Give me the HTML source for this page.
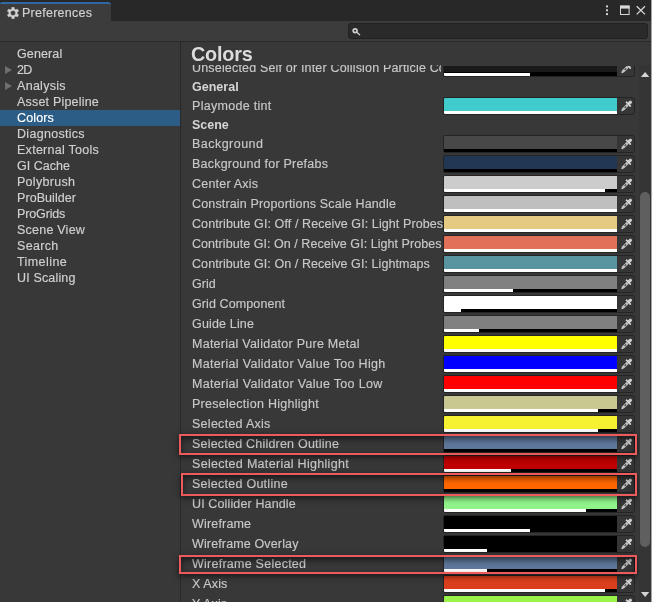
<!DOCTYPE html>
<html><head><meta charset="utf-8"><title>Preferences</title>
<style>
*{box-sizing:border-box;margin:0;padding:0}
html,body{width:652px;height:602px;overflow:hidden;background:#383838}
body{-webkit-text-stroke:.16px;position:relative;font-family:"Liberation Sans",sans-serif;font-size:12.5px;color:#c8c8c8;letter-spacing:.25px}
.abs{position:absolute}
#dock{left:0;top:0;width:652px;height:21px;background:#282828}
#tab{left:0;top:2px;width:111px;height:19px;background:#3c3c3c;border-top:2px solid #2f68a3;border-radius:2px 3px 0 0}
#tabtxt{left:22.4px;top:6px;line-height:15px;color:#d2d2d2;white-space:nowrap;will-change:transform}
#toolbar{left:0;top:21px;width:652px;height:20px;background:#3c3c3c}
#tline{left:0;top:41px;width:652px;height:1px;background:#292929}
#search{left:348px;top:23px;width:300px;height:16px;background:#2a2a2a;border:1px solid #212121;border-radius:3px}
#leftp{left:0;top:42px;width:180px;height:560px}
#ltext{position:absolute;left:0;top:0;width:180px;height:560px;will-change:transform}
.selbg{position:absolute;left:0;width:180px;height:16px;background:#2c5d87}
#vline{left:180px;top:42px;width:1px;height:560px;background:#292929}
.li{position:absolute;left:0;width:180px;height:16px;line-height:16px;padding-left:17px;white-space:nowrap;color:#d0d0d0}
.li.sel{color:#fff}
.tri{position:absolute;left:5px;width:0;height:0;border-left:7px solid #6e6e6e;border-top:4px solid transparent;border-bottom:4px solid transparent}
#title{-webkit-text-stroke:0;left:191px;top:43px;font-size:19.8px;font-weight:bold;line-height:22px;color:#dcdcdc;letter-spacing:-.2px;white-space:nowrap}
#scroll{left:181px;top:65px;width:471px;height:537px;overflow:hidden}
.lab{position:absolute;left:11px;height:20px;line-height:20px;white-space:nowrap;color:#c8c8c8}
.lab.b{-webkit-text-stroke:0;font-weight:bold;color:#d6d6d6}
.cf{position:absolute;left:262px;width:192px;height:18px;border:1px solid #242424;border-radius:2px 3px 3px 2px;background:#363636;overflow:hidden}
.cf .c{position:absolute;left:0;top:0;width:173px;height:13px}
.cf .a{position:absolute;left:0;top:13px;width:173px;height:3px;background:#000}
.cf .a i{position:absolute;left:0;top:0;height:3px;background:#fff}
.eye{position:absolute;left:177px;top:2px;width:12px;height:12px}
#track{left:639px;top:65px;width:13px;height:537px;background:#353535}
#thumb{left:640px;top:192px;width:10px;height:355px;background:#5f5f5f;border-radius:5px}
.hl{position:absolute;border:2px solid #ec5a5c;box-shadow:0 2px 6px rgba(0,0,0,.6), inset 0 3px 6px rgba(0,0,0,.55)}
</style></head><body>
<div id="layer" style="position:absolute;left:0;top:0;width:652px;height:602px;will-change:opacity">
<div id="dock" class="abs"></div>
<div id="tab" class="abs"><svg class="abs" style="left:6.7px;top:2.7px;width:12px;height:12px" viewBox="0 0 12 12"><path fill="#d4d4d4" fill-rule="evenodd" d="M4.67 1.91L4.75 0.13L7.25 0.13L7.33 1.91L8.88 2.80L10.46 1.99L11.71 4.15L10.21 5.11L10.21 6.89L11.71 7.85L10.46 10.01L8.88 9.20L7.33 10.09L7.25 11.87L4.75 11.87L4.67 10.09L3.12 9.20L1.54 10.01L0.29 7.85L1.79 6.89L1.79 5.11L0.29 4.15L1.54 1.99L3.12 2.80zM6 3.5A2.5 2.5 0 1 0 6 8.5A2.5 2.5 0 1 0 6 3.5z" stroke="#d4d4d4" stroke-width=".35" stroke-linejoin="round"/></svg></div><div id="tabtxt" class="abs">Preferences</div>
<div id="toolbar" class="abs"></div>
<div id="tline" class="abs"></div>
<div id="search" class="abs"><svg class="abs" style="left:2px;top:3px;width:10px;height:10px" viewBox="0 0 10 10"><circle cx="4.1" cy="3.7" r="1.9" fill="none" stroke="#cfcfcf" stroke-width="1.7"/><path d="M5.6 5.1L8.6 7.8" stroke="#cfcfcf" stroke-width="1.3" stroke-linecap="round"/></svg></div>
<!-- window controls -->
<svg class="abs" style="left:600px;top:0;width:52px;height:21px" viewBox="0 0 52 21">
<g fill="#cfcfcf"><rect x="6" y="5.4" width="2" height="2"/><rect x="6" y="9.3" width="2" height="2"/><rect x="6" y="13.1" width="2" height="2"/></g>
<rect x="20.5" y="6.1" width="8.6" height="8.4" fill="none" stroke="#d8d8d8" stroke-width="1"/><rect x="20" y="5.6" width="9.6" height="3" fill="#d8d8d8"/>
<path d="M36.7 6.3L45 14.4M45 6.3L36.7 14.4" stroke="#d8d8d8" stroke-width="1.3" fill="none"/>
</svg>
<div id="leftp" class="abs">
<i class="tri" style="top:24px"></i>
<i class="tri" style="top:40px"></i>
<div class="selbg" style="top:68px"></div>
<div id="ltext">
<div class="li" style="top:4px;letter-spacing:0.117px">General</div>
<div class="li" style="top:20px;letter-spacing:-0.650px">2D</div>
<div class="li" style="top:36px;letter-spacing:0.293px">Analysis</div>
<div class="li" style="top:52px;letter-spacing:0.196px">Asset Pipeline</div>
<div class="li sel" style="top:68px;letter-spacing:0.130px">Colors</div>
<div class="li" style="top:84px;letter-spacing:0.300px">Diagnostics</div>
<div class="li" style="top:100px;letter-spacing:0.273px">External Tools</div>
<div class="li" style="top:116px;letter-spacing:0.021px">GI Cache</div>
<div class="li" style="top:132px;letter-spacing:0.287px">Polybrush</div>
<div class="li" style="top:148px;letter-spacing:0.072px">ProBuilder</div>
<div class="li" style="top:164px;letter-spacing:-0.136px">ProGrids</div>
<div class="li" style="top:180px;letter-spacing:0.228px">Scene View</div>
<div class="li" style="top:196px;letter-spacing:0.330px">Search</div>
<div class="li" style="top:212px;letter-spacing:0.421px">Timeline</div>
<div class="li" style="top:228px;letter-spacing:0.161px">UI Scaling</div>
</div>
</div>
<div id="vline" class="abs"></div>
<div id="title" class="abs">Colors</div>
<div id="scroll" class="abs">
<div class="lab b" style="top:12px;letter-spacing:0.017px">General</div>
<div class="lab b" style="top:50px;letter-spacing:-0.025px">Scene</div>
<div class="lab" style="top:-7px;max-width:249px;overflow:hidden;letter-spacing:.175px">Unselected Self or Inter Collision Particle Co</div>
<div class="cf" style="top:-6px;clip-path:inset(7px 0 0 0)"><div class="c" style="background:#191919;height:12px"></div><div class="a" style="top:12px;height:4px"><i style="top:1px;width:86px"></i></div><svg class="eye" viewBox="0 0 12 12"><g transform="translate(-.8 .3) rotate(45 6 6)" fill="#cecece"><rect x="4.4" y="-1.4" width="3.2" height="4.6" rx="1.4"/><rect x="2.6" y="2.1" width="6.8" height="1.7" rx=".3" fill="#d4d4d4"/><path d="M4.7 3.8h2.6v6.4l-.7 2.2q-.6 .5 -1.2 0l-.7-2.2z" fill="#c2c2c2"/><rect x="5.45" y="6.3" width="1.1" height="1.9" fill="#3a3a3a"/></g></svg></div>
<div class="lab" style="top:31px;letter-spacing:0.292px">Playmode tint</div>
<div class="cf" style="top:32px"><div class="c" style="background:#40cccc"></div><div class="a"><i style="width:173px"></i></div><svg class="eye" viewBox="0 0 12 12"><g transform="translate(-.8 .3) rotate(45 6 6)" fill="#cecece"><rect x="4.4" y="-1.4" width="3.2" height="4.6" rx="1.4"/><rect x="2.6" y="2.1" width="6.8" height="1.7" rx=".3" fill="#d4d4d4"/><path d="M4.7 3.8h2.6v6.4l-.7 2.2q-.6 .5 -1.2 0l-.7-2.2z" fill="#c2c2c2"/><rect x="5.45" y="6.3" width="1.1" height="1.9" fill="#3a3a3a"/></g></svg></div>
<div class="lab" style="top:69px;letter-spacing:0.472px">Background</div>
<div class="cf" style="top:70px"><div class="c" style="background:#484848"></div><div class="a"><i style="width:0px"></i></div><svg class="eye" viewBox="0 0 12 12"><g transform="translate(-.8 .3) rotate(45 6 6)" fill="#cecece"><rect x="4.4" y="-1.4" width="3.2" height="4.6" rx="1.4"/><rect x="2.6" y="2.1" width="6.8" height="1.7" rx=".3" fill="#d4d4d4"/><path d="M4.7 3.8h2.6v6.4l-.7 2.2q-.6 .5 -1.2 0l-.7-2.2z" fill="#c2c2c2"/><rect x="5.45" y="6.3" width="1.1" height="1.9" fill="#3a3a3a"/></g></svg></div>
<div class="lab" style="top:89px;letter-spacing:0.217px">Background for Prefabs</div>
<div class="cf" style="top:90px"><div class="c" style="background:#213754"></div><div class="a"><i style="width:0px"></i></div><svg class="eye" viewBox="0 0 12 12"><g transform="translate(-.8 .3) rotate(45 6 6)" fill="#cecece"><rect x="4.4" y="-1.4" width="3.2" height="4.6" rx="1.4"/><rect x="2.6" y="2.1" width="6.8" height="1.7" rx=".3" fill="#d4d4d4"/><path d="M4.7 3.8h2.6v6.4l-.7 2.2q-.6 .5 -1.2 0l-.7-2.2z" fill="#c2c2c2"/><rect x="5.45" y="6.3" width="1.1" height="1.9" fill="#3a3a3a"/></g></svg></div>
<div class="lab" style="top:109px;letter-spacing:0.210px">Center Axis</div>
<div class="cf" style="top:110px"><div class="c" style="background:#cccccc"></div><div class="a"><i style="width:161px"></i></div><svg class="eye" viewBox="0 0 12 12"><g transform="translate(-.8 .3) rotate(45 6 6)" fill="#cecece"><rect x="4.4" y="-1.4" width="3.2" height="4.6" rx="1.4"/><rect x="2.6" y="2.1" width="6.8" height="1.7" rx=".3" fill="#d4d4d4"/><path d="M4.7 3.8h2.6v6.4l-.7 2.2q-.6 .5 -1.2 0l-.7-2.2z" fill="#c2c2c2"/><rect x="5.45" y="6.3" width="1.1" height="1.9" fill="#3a3a3a"/></g></svg></div>
<div class="lab" style="top:129px;letter-spacing:0.156px">Constrain Proportions Scale Handle</div>
<div class="cf" style="top:130px"><div class="c" style="background:#bfbfbf"></div><div class="a"><i style="width:173px"></i></div><svg class="eye" viewBox="0 0 12 12"><g transform="translate(-.8 .3) rotate(45 6 6)" fill="#cecece"><rect x="4.4" y="-1.4" width="3.2" height="4.6" rx="1.4"/><rect x="2.6" y="2.1" width="6.8" height="1.7" rx=".3" fill="#d4d4d4"/><path d="M4.7 3.8h2.6v6.4l-.7 2.2q-.6 .5 -1.2 0l-.7-2.2z" fill="#c2c2c2"/><rect x="5.45" y="6.3" width="1.1" height="1.9" fill="#3a3a3a"/></g></svg></div>
<div class="lab" style="top:149px;letter-spacing:0.089px">Contribute GI: Off / Receive GI: Light Probes</div>
<div class="cf" style="top:150px"><div class="c" style="background:#e5cb81"></div><div class="a"><i style="width:173px"></i></div><svg class="eye" viewBox="0 0 12 12"><g transform="translate(-.8 .3) rotate(45 6 6)" fill="#cecece"><rect x="4.4" y="-1.4" width="3.2" height="4.6" rx="1.4"/><rect x="2.6" y="2.1" width="6.8" height="1.7" rx=".3" fill="#d4d4d4"/><path d="M4.7 3.8h2.6v6.4l-.7 2.2q-.6 .5 -1.2 0l-.7-2.2z" fill="#c2c2c2"/><rect x="5.45" y="6.3" width="1.1" height="1.9" fill="#3a3a3a"/></g></svg></div>
<div class="lab" style="top:169px;letter-spacing:0.048px">Contribute GI: On / Receive GI: Light Probes</div>
<div class="cf" style="top:170px"><div class="c" style="background:#e17058"></div><div class="a"><i style="width:173px"></i></div><svg class="eye" viewBox="0 0 12 12"><g transform="translate(-.8 .3) rotate(45 6 6)" fill="#cecece"><rect x="4.4" y="-1.4" width="3.2" height="4.6" rx="1.4"/><rect x="2.6" y="2.1" width="6.8" height="1.7" rx=".3" fill="#d4d4d4"/><path d="M4.7 3.8h2.6v6.4l-.7 2.2q-.6 .5 -1.2 0l-.7-2.2z" fill="#c2c2c2"/><rect x="5.45" y="6.3" width="1.1" height="1.9" fill="#3a3a3a"/></g></svg></div>
<div class="lab" style="top:189px;letter-spacing:0.075px">Contribute GI: On / Receive GI: Lightmaps</div>
<div class="cf" style="top:190px"><div class="c" style="background:#5994a1"></div><div class="a"><i style="width:173px"></i></div><svg class="eye" viewBox="0 0 12 12"><g transform="translate(-.8 .3) rotate(45 6 6)" fill="#cecece"><rect x="4.4" y="-1.4" width="3.2" height="4.6" rx="1.4"/><rect x="2.6" y="2.1" width="6.8" height="1.7" rx=".3" fill="#d4d4d4"/><path d="M4.7 3.8h2.6v6.4l-.7 2.2q-.6 .5 -1.2 0l-.7-2.2z" fill="#c2c2c2"/><rect x="5.45" y="6.3" width="1.1" height="1.9" fill="#3a3a3a"/></g></svg></div>
<div class="lab" style="top:209px;letter-spacing:0.017px">Grid</div>
<div class="cf" style="top:210px"><div class="c" style="background:#808080"></div><div class="a"><i style="width:69px"></i></div><svg class="eye" viewBox="0 0 12 12"><g transform="translate(-.8 .3) rotate(45 6 6)" fill="#cecece"><rect x="4.4" y="-1.4" width="3.2" height="4.6" rx="1.4"/><rect x="2.6" y="2.1" width="6.8" height="1.7" rx=".3" fill="#d4d4d4"/><path d="M4.7 3.8h2.6v6.4l-.7 2.2q-.6 .5 -1.2 0l-.7-2.2z" fill="#c2c2c2"/><rect x="5.45" y="6.3" width="1.1" height="1.9" fill="#3a3a3a"/></g></svg></div>
<div class="lab" style="top:229px;letter-spacing:0.104px">Grid Component</div>
<div class="cf" style="top:230px"><div class="c" style="background:#ffffff"></div><div class="a"><i style="width:17px"></i></div><svg class="eye" viewBox="0 0 12 12"><g transform="translate(-.8 .3) rotate(45 6 6)" fill="#cecece"><rect x="4.4" y="-1.4" width="3.2" height="4.6" rx="1.4"/><rect x="2.6" y="2.1" width="6.8" height="1.7" rx=".3" fill="#d4d4d4"/><path d="M4.7 3.8h2.6v6.4l-.7 2.2q-.6 .5 -1.2 0l-.7-2.2z" fill="#c2c2c2"/><rect x="5.45" y="6.3" width="1.1" height="1.9" fill="#3a3a3a"/></g></svg></div>
<div class="lab" style="top:249px;letter-spacing:0.161px">Guide Line</div>
<div class="cf" style="top:250px"><div class="c" style="background:#808080"></div><div class="a"><i style="width:35px"></i></div><svg class="eye" viewBox="0 0 12 12"><g transform="translate(-.8 .3) rotate(45 6 6)" fill="#cecece"><rect x="4.4" y="-1.4" width="3.2" height="4.6" rx="1.4"/><rect x="2.6" y="2.1" width="6.8" height="1.7" rx=".3" fill="#d4d4d4"/><path d="M4.7 3.8h2.6v6.4l-.7 2.2q-.6 .5 -1.2 0l-.7-2.2z" fill="#c2c2c2"/><rect x="5.45" y="6.3" width="1.1" height="1.9" fill="#3a3a3a"/></g></svg></div>
<div class="lab" style="top:269px;letter-spacing:0.257px">Material Validator Pure Metal</div>
<div class="cf" style="top:270px"><div class="c" style="background:#ffff00"></div><div class="a"><i style="width:173px"></i></div><svg class="eye" viewBox="0 0 12 12"><g transform="translate(-.8 .3) rotate(45 6 6)" fill="#cecece"><rect x="4.4" y="-1.4" width="3.2" height="4.6" rx="1.4"/><rect x="2.6" y="2.1" width="6.8" height="1.7" rx=".3" fill="#d4d4d4"/><path d="M4.7 3.8h2.6v6.4l-.7 2.2q-.6 .5 -1.2 0l-.7-2.2z" fill="#c2c2c2"/><rect x="5.45" y="6.3" width="1.1" height="1.9" fill="#3a3a3a"/></g></svg></div>
<div class="lab" style="top:289px;letter-spacing:0.306px">Material Validator Value Too High</div>
<div class="cf" style="top:290px"><div class="c" style="background:#0000ff"></div><div class="a"><i style="width:173px"></i></div><svg class="eye" viewBox="0 0 12 12"><g transform="translate(-.8 .3) rotate(45 6 6)" fill="#cecece"><rect x="4.4" y="-1.4" width="3.2" height="4.6" rx="1.4"/><rect x="2.6" y="2.1" width="6.8" height="1.7" rx=".3" fill="#d4d4d4"/><path d="M4.7 3.8h2.6v6.4l-.7 2.2q-.6 .5 -1.2 0l-.7-2.2z" fill="#c2c2c2"/><rect x="5.45" y="6.3" width="1.1" height="1.9" fill="#3a3a3a"/></g></svg></div>
<div class="lab" style="top:309px;letter-spacing:0.308px">Material Validator Value Too Low</div>
<div class="cf" style="top:310px"><div class="c" style="background:#ff0000"></div><div class="a"><i style="width:173px"></i></div><svg class="eye" viewBox="0 0 12 12"><g transform="translate(-.8 .3) rotate(45 6 6)" fill="#cecece"><rect x="4.4" y="-1.4" width="3.2" height="4.6" rx="1.4"/><rect x="2.6" y="2.1" width="6.8" height="1.7" rx=".3" fill="#d4d4d4"/><path d="M4.7 3.8h2.6v6.4l-.7 2.2q-.6 .5 -1.2 0l-.7-2.2z" fill="#c2c2c2"/><rect x="5.45" y="6.3" width="1.1" height="1.9" fill="#3a3a3a"/></g></svg></div>
<div class="lab" style="top:329px;letter-spacing:0.279px">Preselection Highlight</div>
<div class="cf" style="top:330px"><div class="c" style="background:#c9c890"></div><div class="a"><i style="width:154px"></i></div><svg class="eye" viewBox="0 0 12 12"><g transform="translate(-.8 .3) rotate(45 6 6)" fill="#cecece"><rect x="4.4" y="-1.4" width="3.2" height="4.6" rx="1.4"/><rect x="2.6" y="2.1" width="6.8" height="1.7" rx=".3" fill="#d4d4d4"/><path d="M4.7 3.8h2.6v6.4l-.7 2.2q-.6 .5 -1.2 0l-.7-2.2z" fill="#c2c2c2"/><rect x="5.45" y="6.3" width="1.1" height="1.9" fill="#3a3a3a"/></g></svg></div>
<div class="lab" style="top:349px;letter-spacing:0.275px">Selected Axis</div>
<div class="cf" style="top:350px"><div class="c" style="background:#f6f232"></div><div class="a"><i style="width:154px"></i></div><svg class="eye" viewBox="0 0 12 12"><g transform="translate(-.8 .3) rotate(45 6 6)" fill="#cecece"><rect x="4.4" y="-1.4" width="3.2" height="4.6" rx="1.4"/><rect x="2.6" y="2.1" width="6.8" height="1.7" rx=".3" fill="#d4d4d4"/><path d="M4.7 3.8h2.6v6.4l-.7 2.2q-.6 .5 -1.2 0l-.7-2.2z" fill="#c2c2c2"/><rect x="5.45" y="6.3" width="1.1" height="1.9" fill="#3a3a3a"/></g></svg></div>
<div class="lab" style="top:369px;letter-spacing:0.212px">Selected Children Outline</div>
<div class="cf" style="top:370px"><div class="c" style="background:#5e779b"></div><div class="a"><i style="width:0px"></i></div><svg class="eye" viewBox="0 0 12 12"><g transform="translate(-.8 .3) rotate(45 6 6)" fill="#cecece"><rect x="4.4" y="-1.4" width="3.2" height="4.6" rx="1.4"/><rect x="2.6" y="2.1" width="6.8" height="1.7" rx=".3" fill="#d4d4d4"/><path d="M4.7 3.8h2.6v6.4l-.7 2.2q-.6 .5 -1.2 0l-.7-2.2z" fill="#c2c2c2"/><rect x="5.45" y="6.3" width="1.1" height="1.9" fill="#3a3a3a"/></g></svg></div>
<div class="lab" style="top:389px;letter-spacing:0.308px">Selected Material Highlight</div>
<div class="cf" style="top:390px"><div class="c" style="background:#bf0000"></div><div class="a"><i style="width:67px"></i></div><svg class="eye" viewBox="0 0 12 12"><g transform="translate(-.8 .3) rotate(45 6 6)" fill="#cecece"><rect x="4.4" y="-1.4" width="3.2" height="4.6" rx="1.4"/><rect x="2.6" y="2.1" width="6.8" height="1.7" rx=".3" fill="#d4d4d4"/><path d="M4.7 3.8h2.6v6.4l-.7 2.2q-.6 .5 -1.2 0l-.7-2.2z" fill="#c2c2c2"/><rect x="5.45" y="6.3" width="1.1" height="1.9" fill="#3a3a3a"/></g></svg></div>
<div class="lab" style="top:409px;letter-spacing:0.257px">Selected Outline</div>
<div class="cf" style="top:410px"><div class="c" style="background:#ff6600"></div><div class="a"><i style="width:0px"></i></div><svg class="eye" viewBox="0 0 12 12"><g transform="translate(-.8 .3) rotate(45 6 6)" fill="#cecece"><rect x="4.4" y="-1.4" width="3.2" height="4.6" rx="1.4"/><rect x="2.6" y="2.1" width="6.8" height="1.7" rx=".3" fill="#d4d4d4"/><path d="M4.7 3.8h2.6v6.4l-.7 2.2q-.6 .5 -1.2 0l-.7-2.2z" fill="#c2c2c2"/><rect x="5.45" y="6.3" width="1.1" height="1.9" fill="#3a3a3a"/></g></svg></div>
<div class="lab" style="top:429px;letter-spacing:0.132px">UI Collider Handle</div>
<div class="cf" style="top:430px"><div class="c" style="background:#91f48b"></div><div class="a"><i style="width:142px"></i></div><svg class="eye" viewBox="0 0 12 12"><g transform="translate(-.8 .3) rotate(45 6 6)" fill="#cecece"><rect x="4.4" y="-1.4" width="3.2" height="4.6" rx="1.4"/><rect x="2.6" y="2.1" width="6.8" height="1.7" rx=".3" fill="#d4d4d4"/><path d="M4.7 3.8h2.6v6.4l-.7 2.2q-.6 .5 -1.2 0l-.7-2.2z" fill="#c2c2c2"/><rect x="5.45" y="6.3" width="1.1" height="1.9" fill="#3a3a3a"/></g></svg></div>
<div class="lab" style="top:449px;letter-spacing:0.175px">Wireframe</div>
<div class="cf" style="top:450px"><div class="c" style="background:#000000"></div><div class="a"><i style="width:86px"></i></div><svg class="eye" viewBox="0 0 12 12"><g transform="translate(-.8 .3) rotate(45 6 6)" fill="#cecece"><rect x="4.4" y="-1.4" width="3.2" height="4.6" rx="1.4"/><rect x="2.6" y="2.1" width="6.8" height="1.7" rx=".3" fill="#d4d4d4"/><path d="M4.7 3.8h2.6v6.4l-.7 2.2q-.6 .5 -1.2 0l-.7-2.2z" fill="#c2c2c2"/><rect x="5.45" y="6.3" width="1.1" height="1.9" fill="#3a3a3a"/></g></svg></div>
<div class="lab" style="top:469px;letter-spacing:0.138px">Wireframe Overlay</div>
<div class="cf" style="top:470px"><div class="c" style="background:#000000"></div><div class="a"><i style="width:43px"></i></div><svg class="eye" viewBox="0 0 12 12"><g transform="translate(-.8 .3) rotate(45 6 6)" fill="#cecece"><rect x="4.4" y="-1.4" width="3.2" height="4.6" rx="1.4"/><rect x="2.6" y="2.1" width="6.8" height="1.7" rx=".3" fill="#d4d4d4"/><path d="M4.7 3.8h2.6v6.4l-.7 2.2q-.6 .5 -1.2 0l-.7-2.2z" fill="#c2c2c2"/><rect x="5.45" y="6.3" width="1.1" height="1.9" fill="#3a3a3a"/></g></svg></div>
<div class="lab" style="top:489px;letter-spacing:0.250px">Wireframe Selected</div>
<div class="cf" style="top:490px"><div class="c" style="background:#5e779b"></div><div class="a"><i style="width:43px"></i></div><svg class="eye" viewBox="0 0 12 12"><g transform="translate(-.8 .3) rotate(45 6 6)" fill="#cecece"><rect x="4.4" y="-1.4" width="3.2" height="4.6" rx="1.4"/><rect x="2.6" y="2.1" width="6.8" height="1.7" rx=".3" fill="#d4d4d4"/><path d="M4.7 3.8h2.6v6.4l-.7 2.2q-.6 .5 -1.2 0l-.7-2.2z" fill="#c2c2c2"/><rect x="5.45" y="6.3" width="1.1" height="1.9" fill="#3a3a3a"/></g></svg></div>
<div class="lab" style="top:509px;letter-spacing:0.110px">X Axis</div>
<div class="cf" style="top:510px"><div class="c" style="background:#db3e1d"></div><div class="a"><i style="width:161px"></i></div><svg class="eye" viewBox="0 0 12 12"><g transform="translate(-.8 .3) rotate(45 6 6)" fill="#cecece"><rect x="4.4" y="-1.4" width="3.2" height="4.6" rx="1.4"/><rect x="2.6" y="2.1" width="6.8" height="1.7" rx=".3" fill="#d4d4d4"/><path d="M4.7 3.8h2.6v6.4l-.7 2.2q-.6 .5 -1.2 0l-.7-2.2z" fill="#c2c2c2"/><rect x="5.45" y="6.3" width="1.1" height="1.9" fill="#3a3a3a"/></g></svg></div>
<div class="lab" style="top:529px;letter-spacing:0.110px">Y Axis</div>
<div class="cf" style="top:530px"><div class="c" style="background:#9af348"></div><div class="a"><i style="width:161px"></i></div><svg class="eye" viewBox="0 0 12 12"><g transform="translate(-.8 .3) rotate(45 6 6)" fill="#cecece"><rect x="4.4" y="-1.4" width="3.2" height="4.6" rx="1.4"/><rect x="2.6" y="2.1" width="6.8" height="1.7" rx=".3" fill="#d4d4d4"/><path d="M4.7 3.8h2.6v6.4l-.7 2.2q-.6 .5 -1.2 0l-.7-2.2z" fill="#c2c2c2"/><rect x="5.45" y="6.3" width="1.1" height="1.9" fill="#3a3a3a"/></g></svg></div>
</div>
<div class="hl" style="left:179px;top:434px;width:458px;height:21px"></div>
<div class="hl" style="left:181px;top:473px;width:456px;height:23px"></div>
<div class="hl" style="left:179px;top:555px;width:458px;height:19px"></div>
<div id="track" class="abs"></div><div id="thumb" class="abs"></div>
<svg class="abs" style="left:639px;top:65px;width:13px;height:14px" viewBox="0 0 13 14"><path d="M1.9 12.1L6.1 7L10.3 12.1z" fill="#d4d4d4"/></svg>
<svg class="abs" style="left:639px;top:588px;width:13px;height:14px" viewBox="0 0 13 14"><path d="M1.9 4L6.1 9.1L10.3 4z" fill="#d4d4d4"/></svg>
<div class="abs" style="left:651px;top:0;width:1px;height:602px;background:#a4a4a4"></div>
</div>
</body></html>
